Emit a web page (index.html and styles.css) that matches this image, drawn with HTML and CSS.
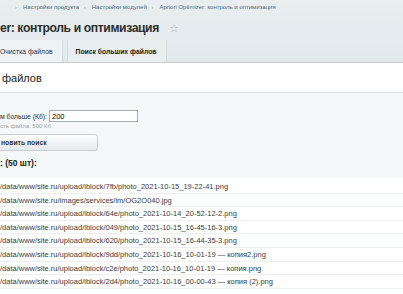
FILE: index.html
```
<!DOCTYPE html>
<html lang="ru">
<head>
  <meta charset="UTF-8" />
  <title>Apriori Optimizer: контроль и оптимизация</title>
  <link rel="stylesheet" href="styles.css">
</head>
<body>

  <!-- шапка: крошки, заголовок, вкладки -->
  <div class="top">
    <div class="crumbs">
      <span class="sep">›</span><a href="#">Настройки продукта</a>
      <span class="sep">›</span><a href="#">Настройки модулей</a>
      <span class="sep">›</span><a href="#">Apriori Optimizer: контроль и оптимизация</a>
    </div>
    <h1 class="title">er: контроль и оптимизация <span class="star">☆</span></h1>
    <div class="tabs">
      <span class="tab">Очистка файлов</span>
      <span class="tab active">Поиск больших файлов</span>
    </div>
  </div>

  <div class="panel-head">файлов</div>

  <!-- форма поиска -->
  <div class="form">
    <div class="field">
      <label for="size">м больше (Кб):</label>
      <input id="size" type="text" value="200" />
    </div>
    <div class="hint">сть файла: 500 Кб</div>
    <button class="btn">новить поиск</button>
    <div class="count">: (50 шт):</div>
  </div>

  <!-- найденные файлы -->
  <ul class="files">
    <li>/data/www/site.ru/upload/iblock/7fb/photo_2021-10-15_19-22-41.png</li>
    <li>/data/www/site.ru/images/services/im/OG2O040.jpg</li>
    <li>/data/www/site.ru/upload/iblock/64e/photo_2021-10-14_20-52-12-2.png</li>
    <li>/data/www/site.ru/upload/iblock/049/photo_2021-10-15_16-45-16-3.png</li>
    <li>/data/www/site.ru/upload/iblock/620/photo_2021-10-15_16-44-35-3.png</li>
    <li>/data/www/site.ru/upload/iblock/9dd/photo_2021-10-16_10-01-19 — копия2.png</li>
    <li>/data/www/site.ru/upload/iblock/c2e/photo_2021-10-16_10-01-19 — копия.png</li>
    <li>/data/www/site.ru/upload/iblock/2d4/photo_2021-10-16_00-00-43 — копия (2).png</li>
  </ul>

</body>
</html>
```

FILE: styles.css
```
/* ===== основа ===== */
*{box-sizing:border-box}
html,body{height:100%}
body{
  margin:0;
  font-family:"Liberation Sans",Arial,sans-serif;
  color:#000;
  background:#fff;
  overflow:hidden;
}

/* ===== шапка ===== */
.top{
  background:linear-gradient(#e9eef0,#e2e9ec);
  border-bottom:1px solid #c5cdd1;
}
.crumbs{
  padding:2px 0 0 12px;
  height:13px;
  font-size:6px;
  line-height:11px;
  color:#7a8a93;
}
.crumbs a{color:#4d6b80;text-decoration:none}
.crumbs .sep{margin:0 6px 0 3px;color:#9aa6ad}
.title{
  margin:0;
  height:27px;
  font-size:12.2px;
  letter-spacing:-0.4px;
  line-height:24px;
  font-weight:700;
  color:#2d2d2d;
  display:flex;
  align-items:center;
  padding-top:2px;
}
.star{
  margin-left:10px;
  font-size:11px;
  font-weight:400;
  letter-spacing:0;
  color:#aab4b9;
}

/* ===== вкладки ===== */
.tabs{display:flex;gap:4px;height:22px;align-items:flex-end}
.tab{
  height:22px;
  line-height:23px;
  font-size:6.8px;
  color:#333;
  background:#eef2f4;
  padding:0 9px 0 0;
  border-right:1px solid #d3dbdf;
}
.tab.active{
  font-weight:700;
  color:#222;
  background:#e9eff1;
  border-left:1px solid #d3dbdf;
  padding:0 10px 0 8px;
}

/* ===== заголовок панели ===== */
.panel-head{
  background:#fff;
  border-top:1px solid #fff;
  border-bottom:1px solid #d9dfe2;
  height:30px;
  padding:0 0 0 2px;
  font-size:11px;
  line-height:28px;
  color:#222;
}

/* ===== форма ===== */
.form{
  background:#f5f7f8;
  padding:17px 0 10px;
}
.field{display:flex;align-items:center;font-size:6.8px;color:#333}
.field input{
  margin-left:2px;
  width:89px;
  height:12px;
  border:1px solid #a5adb1;
  font:7.5px "Liberation Sans",Arial,sans-serif;
  padding:0 2px;
  background:#fff;
}
.hint{font-size:6px;color:#9ba5aa;margin-top:1px}
.btn{
  display:block;
  margin:5px 0 0 -2px;
  width:100px;
  height:17px;
  border:1px solid #c7cdd0;
  border-radius:3px;
  background:linear-gradient(#fdfdfd,#e6eaec);
  font:700 6.8px "Liberation Sans",Arial,sans-serif;
  color:#333;
  text-align:left;
  padding:0 0 0 2px;
}
.count{
  margin-top:7px;
  font-size:8.5px;
  font-weight:700;
  color:#222;
}

/* ===== список файлов ===== */
.files{
  list-style:none;
  margin:0;
  padding:2px 0 0;
  background:#fff;
}
.files li{
  height:13.6px;
  line-height:13px;
  font-size:7.5px;
  color:#3a3a3a;
  border-bottom:1px solid #eceff0;
  white-space:nowrap;
}
```
